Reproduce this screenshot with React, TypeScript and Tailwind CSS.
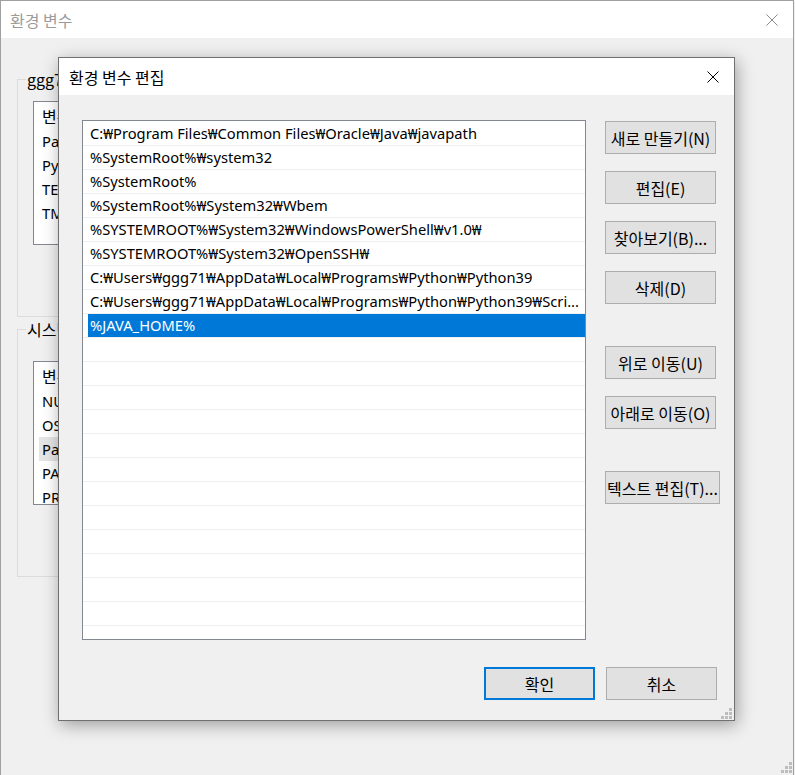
import React from 'react';

const paths = [
  'C:₩Program Files₩Common Files₩Oracle₩Java₩javapath',
  '%SystemRoot%₩system32',
  '%SystemRoot%',
  '%SystemRoot%₩System32₩Wbem',
  '%SYSTEMROOT%₩System32₩WindowsPowerShell₩v1.0₩',
  '%SYSTEMROOT%₩System32₩OpenSSH₩',
  'C:₩Users₩ggg71₩AppData₩Local₩Programs₩Python₩Python39',
  'C:₩Users₩ggg71₩AppData₩Local₩Programs₩Python₩Python39₩Scri...',
  '%JAVA_HOME%',
];

const userVars = ['Path', 'PyCharm Community Edition', 'TEMP', 'TMP'];
const sysVars = ['NUMBER_OF_PROCESSORS', 'OS', 'Path', 'PATHEXT', 'PROCESSOR_ARCHITECTURE'];

function CloseIcon({ color }: { color: string }) {
  return (
    <svg width="12" height="12" viewBox="0 0 12 12">
      <path d="M0.5 0.5 L11.5 11.5 M11.5 0.5 L0.5 11.5" stroke={color} strokeWidth="1" fill="none" />
    </svg>
  );
}

function Grip() {
  return (
    <svg width="11" height="11" viewBox="0 0 11 11">
      <g fill="#bdbdbd">
        <rect x="8" y="0" width="3" height="3" />
        <rect x="4" y="4" width="3" height="3" />
        <rect x="8" y="4" width="3" height="3" />
        <rect x="0" y="8" width="3" height="3" />
        <rect x="4" y="8" width="3" height="3" />
        <rect x="8" y="8" width="3" height="3" />
      </g>
    </svg>
  );
}

function Btn({ label, wide, primary }: { label: string; wide?: boolean; primary?: boolean }) {
  return (
    <div
      className={`h-[33px] shrink-0 flex items-center justify-center bg-[#e1e1e1] text-black whitespace-nowrap ${
        primary ? 'border-2 border-[#0078d7]' : 'border border-[#adadad]'
      } ${wide ? 'w-[115px]' : 'w-[111px]'}`}
    >
      {label}
    </div>
  );
}

function VarList({ items, hover }: { items: string[]; hover?: number }) {
  return (
    <div className="w-[660px] h-[144px] border border-[#828790] bg-white overflow-hidden">
      <div className="h-[27px] flex items-center pl-[8px]">변수</div>
      {items.map((v, i) => (
        <div
          key={v + i}
          className={`h-[24px] flex items-center ml-[5px] pl-[3px] font-['Noto_Sans',sans-serif] text-[14.7px] ${
            i === hover ? 'bg-[#e5e5e5]' : ''
          }`}
        >
          {v}
        </div>
      ))}
    </div>
  );
}

export default function App() {
  return (
    <div className="relative w-[795px] h-[775px] overflow-hidden bg-[#f0f0f0] font-['Noto_Sans_CJK_KR','Noto_Sans',sans-serif] text-[16px] text-black">
      {/* background window */}
      <div className="w-[794px] h-[775px] border border-b-0 border-[#a0a0a0] flex flex-col">
        <div className="h-[37px] bg-white flex items-center justify-between pl-[9px] pr-[15px] text-[#9b9b9b]">
          <span>환경 변수</span>
          <CloseIcon color="#8a8a8a" />
        </div>
        <div className="flex flex-col pl-[16px] pt-[31px]">
          <fieldset className="w-[700px] h-[248px] border border-[#dcdcdc]">
            <legend className="ml-[8px] px-[1px] leading-[20px]">ggg71에 대한 사용자 변수(U)</legend>
            <div className="mt-[12px] pl-[15px]">
              <VarList items={userVars} />
            </div>
          </fieldset>
          <fieldset className="mt-[2px] w-[700px] h-[258px] border border-[#dcdcdc]">
            <legend className="ml-[8px] px-[1px] leading-[20px]">시스템 변수(S)</legend>
            <div className="mt-[22px] pl-[15px]">
              <VarList items={sysVars} hover={2} />
            </div>
          </fieldset>
        </div>
        <div className="mt-auto self-end pr-[1px] pb-[2px]">
          <Grip />
        </div>
      </div>

      {/* edit dialog */}
      <div className="absolute left-[58px] top-[57px] w-[677px] h-[664px] border border-[#707070] bg-[#f0f0f0] shadow-[2px_4px_16px_rgba(0,0,0,0.35)] flex flex-col">
        <div className="h-[37px] bg-white flex items-center justify-between pl-[10px] pr-[15px]">
          <span>환경 변수 편집</span>
          <CloseIcon color="#000" />
        </div>
        <div className="flex-1 flex flex-col pl-[23px] pr-[17px] pt-[25px] pb-[20px]">
          <div className="flex gap-[19px]">
            <div className="w-[504px] h-[520px] shrink-0 border border-[#828790] bg-white pt-[1px] overflow-hidden font-['Noto_Sans',sans-serif] text-[14.7px]">
              {paths.map((p, i) => (
                <div key={p} className="h-[24px] border-b border-[#efefef]">
                  <div
                    className={`h-full ml-[5px] pl-[2px] flex items-center whitespace-nowrap overflow-hidden ${
                      i === paths.length - 1 ? 'bg-[#0078d7] text-white' : ''
                    }`}
                  >
                    {p}
                  </div>
                </div>
              ))}
              {Array.from({ length: 13 }).map((_, i) => (
                <div key={i} className="h-[24px] border-b border-[#efefef]" />
              ))}
            </div>
            <div className="mt-[1px] flex flex-col gap-[17px]">
              <Btn label="새로 만들기(N)" />
              <Btn label="편집(E)" />
              <Btn label="찾아보기(B)..." />
              <Btn label="삭제(D)" />
              <div className="mt-[25px]">
                <Btn label="위로 이동(U)" />
              </div>
              <Btn label="아래로 이동(O)" />
              <div className="mt-[25px]">
                <Btn label="텍스트 편집(T)..." wide />
              </div>
            </div>
          </div>
          <div className="mt-auto flex justify-end gap-[11px]">
            <Btn label="확인" primary />
            <Btn label="취소" />
          </div>
        </div>
        <div className="absolute right-[2px] bottom-[1px]">
          <Grip />
        </div>
      </div>
    </div>
  );
}
